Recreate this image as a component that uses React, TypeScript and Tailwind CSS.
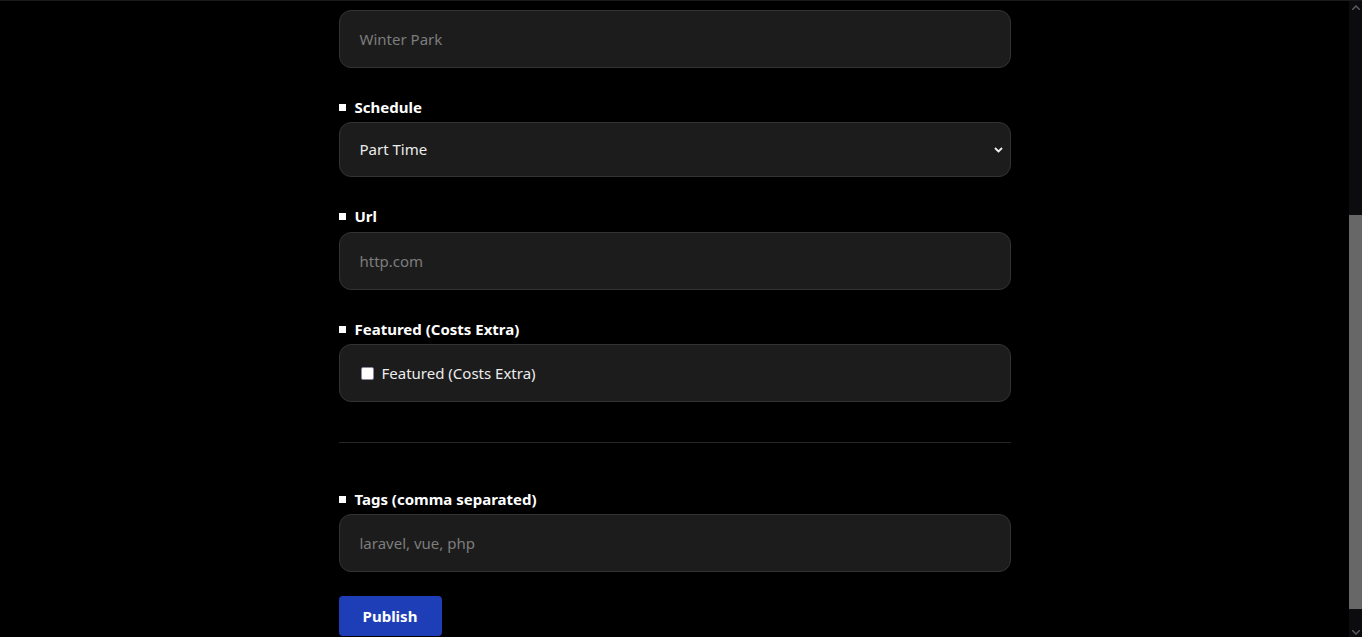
import React from "react";

const font = { fontFamily: '"Noto Sans", "Open Sans", Arial, sans-serif' };

function Label({ text, gap = "mb-[5px]" }: { text: string; gap?: string }) {
  return (
    <div className={`flex h-5 items-center gap-[9px] ${gap}`}>
      <span className="w-[7px] h-[7px] bg-white" />
      <span className="text-[15px] font-bold text-white leading-5">{text}</span>
    </div>
  );
}

function Field({ placeholder }: { placeholder: string }) {
  return (
    <div className="h-[58px] rounded-xl border border-[#333] bg-[#1c1c1c] flex items-center px-5">
      <span className="text-[15px] text-[#7d7d7d]">{placeholder}</span>
    </div>
  );
}

export default function App() {
  return (
    <div className="h-screen flex bg-black overflow-hidden border-t border-[#1a1a1a]" style={font}>
      <main className="flex-1">
        <form className="w-[672px] mx-auto pt-[9px]">
          <Field placeholder="Winter Park" />

          <div className="mt-[29px]">
            <Label text="Schedule" />
            <div className="h-[55px] rounded-xl border border-[#333] bg-[#1c1c1c] flex items-center justify-between pl-5 pr-[7px]">
              <span className="text-[15px] text-[#ececec]">Part Time</span>
              <svg width="9" height="6" viewBox="0 0 9 6" fill="none">
                <path d="M1 1l3.5 3.5L8 1" stroke="#f0f0f0" strokeWidth="1.8" />
              </svg>
            </div>
          </div>

          <div className="mt-[29px]">
            <Label text="Url" gap="mb-[6px]" />
            <Field placeholder="http.com" />
          </div>

          <div className="mt-[29px]">
            <Label text="Featured (Costs Extra)" />
            <div className="h-[58px] rounded-xl border border-[#333] bg-[#1c1c1c] flex items-center pl-[21px] gap-[8px]">
              <span className="w-[13px] h-[13px] rounded-[2px] bg-white border border-[#8a8a9a]" />
              <span className="text-[15px] text-[#ececec]">Featured (Costs Extra)</span>
            </div>
          </div>

          <hr className="mt-10 border-0 h-px bg-[#262626]" />

          <div className="mt-[46px]">
            <Label text="Tags (comma separated)" />
            <Field placeholder="laravel, vue, php" />
          </div>

          <button
            type="button"
            className="mt-6 h-10 w-[103px] rounded bg-[#1e3eb8] text-white text-[15px] font-bold"
          >
            Publish
          </button>
        </form>
      </main>

      <div className="w-[13px] bg-[#0c0c0f] flex flex-col items-center relative">
        <svg className="mt-[4px]" width="8" height="5" viewBox="0 0 8 5">
          <path d="M0 5L4 1l4 4" stroke="#5a5a5f" strokeWidth="1.5" fill="none" />
        </svg>
        <div className="absolute left-0 right-0 top-[214px] h-[394px] bg-[#676767]" />
        <svg className="mt-auto mb-[2px]" width="8" height="5" viewBox="0 0 8 5">
          <path d="M0 0l4 4 4-4" stroke="#5a5a5f" strokeWidth="1.5" fill="none" />
        </svg>
      </div>
    </div>
  );
}
